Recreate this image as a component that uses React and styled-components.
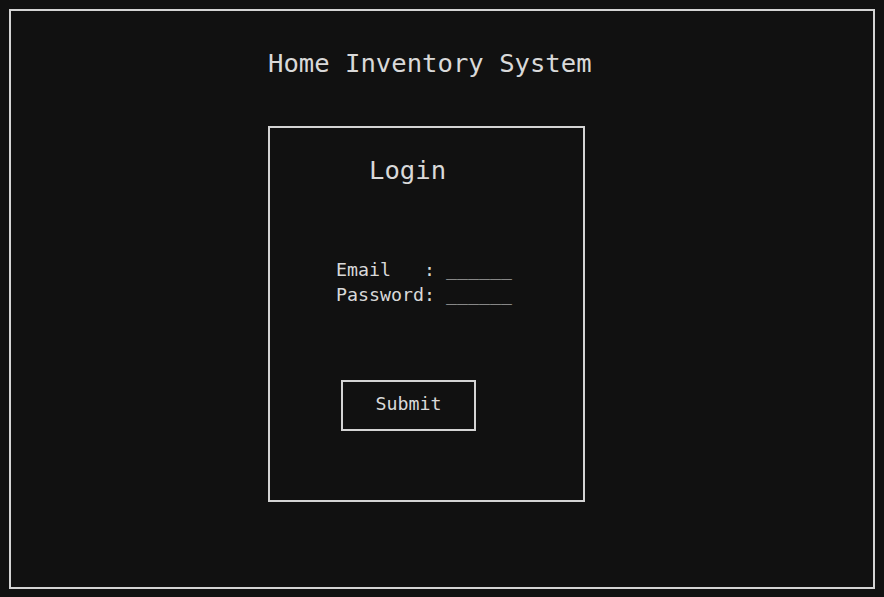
import styled, { createGlobalStyle } from 'styled-components';

const GlobalStyle = createGlobalStyle`
  html, body {
    margin: 0;
    padding: 0;
    background-color: #111111;
  }
  body {
    font-family: "DejaVu Sans Mono", "Liberation Mono", monospace;
    color: #d9d9d9;
  }
  * {
    box-sizing: border-box;
  }
`;

function App() {
  return (
    <>
      <GlobalStyle />
      <Frame>
        <Title>Home Inventory System</Title>
        <LoginBox>
          <LoginHeading>Login</LoginHeading>
          <Fields>
            <FieldRow>{'Email   : ______'}</FieldRow>
            <FieldRow>{'Password: ______'}</FieldRow>
          </Fields>
          <SubmitButton>Submit</SubmitButton>
        </LoginBox>
      </Frame>
    </>
  );
}

export default App;

const Frame = styled.div`
  margin: 9px;
  width: 866px;
  height: 580px;
  border: 2px solid #d4d4d4;
  display: flex;
  flex-direction: column;
  align-items: flex-start;
  padding: 37px 0 0 257px;
`;

const Title = styled.h1`
  margin: 0;
  font-size: 25.6px;
  font-weight: 400;
  line-height: 30px;
  white-space: pre;
`;

const LoginBox = styled.div`
  margin-top: 48px;
  width: 317px;
  height: 376px;
  border: 2px solid #d4d4d4;
  display: flex;
  flex-direction: column;
  align-items: flex-start;
  padding: 27px 0 0 66px;
`;

const LoginHeading = styled.h2`
  margin: 0 0 0 33px;
  font-size: 25.6px;
  font-weight: 400;
  line-height: 30px;
`;

const Fields = styled.div`
  margin-top: 72px;
  display: flex;
  flex-direction: column;
`;

const FieldRow = styled.div`
  font-size: 18.3px;
  line-height: 25px;
  white-space: pre;
`;

const SubmitButton = styled.button`
  margin: 73px 0 0 5px;
  width: 135px;
  height: 51px;
  background: transparent;
  border: 2px solid #d4d4d4;
  color: #d9d9d9;
  font-family: "DejaVu Sans Mono", "Liberation Mono", monospace;
  font-size: 18.3px;
  padding: 0 0 4px 0;
  display: flex;
  align-items: center;
  justify-content: center;
`;
